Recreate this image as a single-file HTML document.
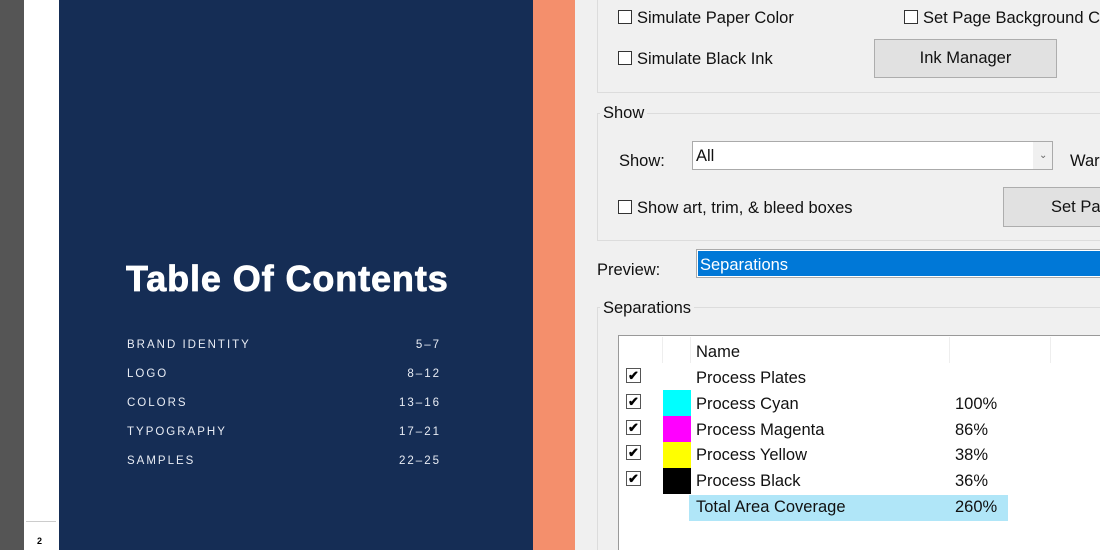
<!DOCTYPE html>
<html><head><meta charset="utf-8"><style>
*{margin:0;padding:0;box-sizing:border-box}
html{width:1100px;height:550px;overflow:hidden}
body{width:1100px;height:550px;overflow:hidden;position:relative;background:#f0f0f0;font-family:"Liberation Sans",sans-serif}
.a{position:absolute}
.t{position:absolute;font-size:16.5px;color:#111;white-space:nowrap;line-height:20px}
.cb{position:absolute;width:14px;height:14px;border:1px solid #333;background:#fff}
.ck{position:absolute;width:15px;height:15px;border:1px solid #555;background:#fff;font-size:13px;line-height:13px;text-align:center;color:#000;font-weight:bold}
.btn{position:absolute;background:#e1e1e1;border:1px solid #adadad;font-size:16.5px;text-align:center;color:#111}
.toc{position:absolute;left:127px;width:314px;color:#e8ecf4;font-size:11.5px;letter-spacing:2px;height:14px}
.toc span{position:absolute;right:0;top:0;letter-spacing:2px}
.grp{position:absolute;border:1px solid #dcdcdc}
</style></head><body>
<div class="a" style="left:0;top:0;width:24px;height:550px;background:#555"></div>
<div class="a" style="left:24px;top:0;width:35px;height:550px;background:#fff"></div>
<div class="a" style="left:26px;top:521px;width:30px;height:1px;background:#ccc"></div>
<div class="a" style="left:37px;top:536px;font-size:9px;font-weight:bold;color:#000">2</div>
<div class="a" style="left:59px;top:0;width:474px;height:550px;background:#152d55"></div>
<div class="a" style="left:533px;top:0;width:42px;height:550px;background:#f48f6c"></div>
<div class="a" style="left:126px;top:258px;font-size:36px;font-weight:bold;color:#fff;letter-spacing:0.9px;-webkit-text-stroke:0.8px #fff">Table Of Contents</div>
<div class="toc" style="top:339px">BRAND IDENTITY<span>5–7</span></div>
<div class="toc" style="top:368px">LOGO<span>8–12</span></div>
<div class="toc" style="top:397px">COLORS<span>13–16</span></div>
<div class="toc" style="top:426px">TYPOGRAPHY<span>17–21</span></div>
<div class="toc" style="top:455px">SAMPLES<span>22–25</span></div>

<div class="grp" style="left:597px;top:-5px;width:520px;height:98px"></div>
<div class="cb" style="left:618px;top:10px"></div><div class="t" style="left:637px;top:8px">Simulate Paper Color</div>
<div class="cb" style="left:904px;top:10px"></div><div class="t" style="left:923px;top:8px">Set Page Background C</div>
<div class="cb" style="left:618px;top:51px"></div><div class="t" style="left:637px;top:49px">Simulate Black Ink</div>
<div class="btn" style="left:874px;top:39px;width:183px;height:39px;line-height:37px">Ink Manager</div>

<div class="grp" style="left:597px;top:113px;width:520px;height:128px"></div>
<div class="t" style="left:600px;top:103px;background:#f0f0f0;padding:0 3px">Show</div>
<div class="t" style="left:619px;top:151px">Show:</div>
<div class="a" style="left:692px;top:141px;width:361px;height:29px;background:#fff;border:1px solid #aaa"></div>
<div class="t" style="left:696px;top:146px">All</div>
<div class="a" style="left:1033px;top:142px;width:19px;height:27px;background:#f0f0f0"></div>
<div class="a" style="left:1039px;top:150px;font-size:10px;color:#666">&#8964;</div>
<div class="t" style="left:1070px;top:151px">War</div>
<div class="cb" style="left:618px;top:200px"></div><div class="t" style="left:637px;top:198px">Show art, trim, &amp; bleed boxes</div>
<div class="btn" style="left:1003px;top:187px;width:120px;height:40px;line-height:38px;text-align:left;padding-left:47px">Set Pag</div>

<div class="t" style="left:597px;top:260px">Preview:</div>
<div class="a" style="left:696px;top:249px;width:410px;height:29px;border:1px solid #aaa;background:#fff"></div>
<div class="a" style="left:698px;top:251px;width:410px;height:25px;background:#0078d7"></div>
<div class="t" style="left:700px;top:255px;color:#fff">Separations</div>

<div class="grp" style="left:597px;top:307px;width:520px;height:260px"></div>
<div class="t" style="left:600px;top:298px;background:#f0f0f0;padding:0 3px">Separations</div>
<div class="a" style="left:618px;top:335px;width:490px;height:230px;background:#fff;border:1px solid #999"></div>
<div class="a" style="left:662px;top:337px;width:1px;height:26px;background:#eee"></div>
<div class="a" style="left:690px;top:337px;width:1px;height:26px;background:#eee"></div>
<div class="a" style="left:949px;top:337px;width:1px;height:26px;background:#eee"></div>
<div class="a" style="left:1050px;top:337px;width:1px;height:26px;background:#eee"></div>
<div class="t" style="left:696px;top:342px">Name</div>

<div class="ck" style="left:626px;top:368px">✔</div><div class="t" style="left:696px;top:368px">Process Plates</div>
<div class="ck" style="left:626px;top:394px">✔</div><div class="a" style="left:663px;top:390px;width:28px;height:26px;background:#00ffff"></div><div class="t" style="left:696px;top:394px">Process Cyan</div><div class="t" style="left:955px;top:394px">100%</div>
<div class="ck" style="left:626px;top:420px">✔</div><div class="a" style="left:663px;top:416px;width:28px;height:26px;background:#ff00ff"></div><div class="t" style="left:696px;top:420px">Process Magenta</div><div class="t" style="left:955px;top:420px">86%</div>
<div class="ck" style="left:626px;top:445px">✔</div><div class="a" style="left:663px;top:442px;width:28px;height:26px;background:#ffff00"></div><div class="t" style="left:696px;top:445px">Process Yellow</div><div class="t" style="left:955px;top:445px">38%</div>
<div class="ck" style="left:626px;top:471px">✔</div><div class="a" style="left:663px;top:468px;width:28px;height:26px;background:#000"></div><div class="t" style="left:696px;top:471px">Process Black</div><div class="t" style="left:955px;top:471px">36%</div>
<div class="a" style="left:689px;top:495px;width:319px;height:26px;background:#b0e6f8"></div>
<div class="t" style="left:696px;top:497px">Total Area Coverage</div><div class="t" style="left:955px;top:497px">260%</div>
</body></html>
